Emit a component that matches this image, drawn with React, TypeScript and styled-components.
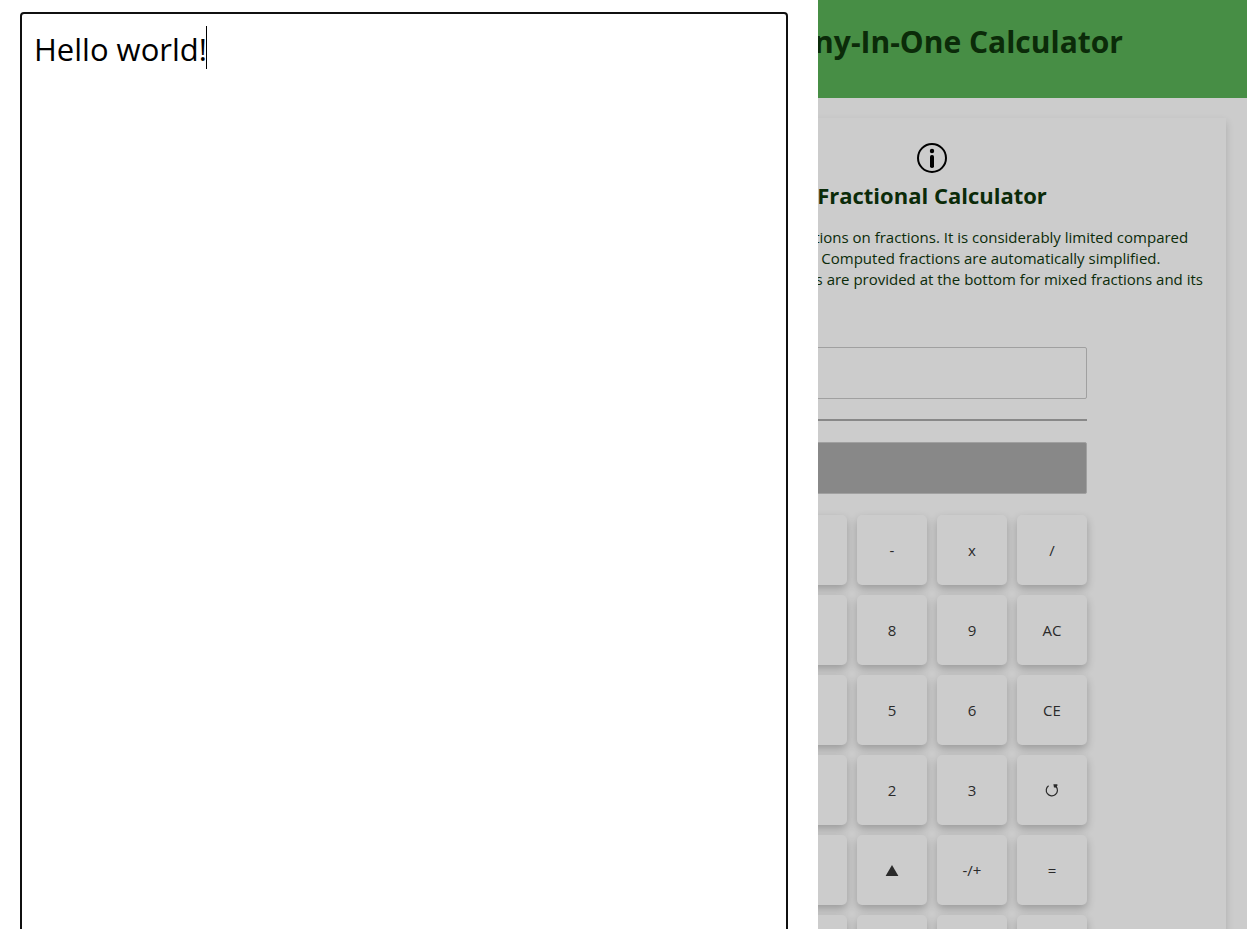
import { useState } from 'react';
import styled, { createGlobalStyle } from 'styled-components';

const GlobalStyle = createGlobalStyle`
  *, *::before, *::after { box-sizing: border-box; }
  body {
    margin: 0;
    background: #cccccc;
    font-family: 'Open Sans', 'Noto Sans', 'DejaVu Sans', sans-serif;
    color: #0b2b09;
  }
  h1, h2, p { margin: 0; }
`;

const Page = styled.div`
  height: 100vh;
  overflow: hidden;
`;

const Header = styled.header`
  height: 98px;
  padding: 20px 124px 0 20px;
  background: #478e45;
  text-align: right;
`;

const SiteTitle = styled.h1`
  font-size: 30px;
  line-height: 44px;
  font-weight: 700;
`;

const Columns = styled.main`
  display: grid;
  grid-template-columns: 1fr 1fr;
  gap: 30px;
  padding: 20px 21px 20px 20px;
`;

const Card = styled.section`
  grid-column: 2;
  display: flex;
  flex-direction: column;
  align-items: center;
  padding: 25px 20px;
  background: #cccccc;
  box-shadow: 0 4px 8px rgba(0, 0, 0, 0.16);
`;

const InfoButton = styled.button`
  display: block;
  width: 30px;
  height: 30px;
  padding: 0;
  border: 0;
  background: none;
  color: #000;

  svg { display: block; }
`;

const CardTitle = styled.h2`
  margin-top: 6px;
  font-size: 22px;
  line-height: 32px;
  font-weight: 700;
  white-space: nowrap;
`;

const Description = styled.p`
  align-self: stretch;
  margin-top: 16px;
  font-size: 15px;
  line-height: 21px;
  white-space: nowrap;
`;

const Calculator = styled.form`
  width: 310px;
  margin-top: 36px;
`;

const Display = styled.input<{ $filled?: boolean }>`
  display: block;
  width: 100%;
  height: 52px;
  padding: 0 10px;
  border: 1px solid #a0a0a0;
  border-radius: 2px;
  background: ${(p) => (p.$filled ? '#888888' : '#cccccc')};
  font: inherit;
  outline: 0;
`;

const FractionBar = styled.hr`
  height: 2px;
  margin: 20px 0 21px;
  border: 0;
  background: #888888;
`;

const Keypad = styled.div`
  display: grid;
  grid-template-columns: repeat(4, 1fr);
  grid-auto-rows: 70px;
  gap: 10px;
  margin-top: 21px;
`;

const Key = styled.button`
  display: flex;
  align-items: center;
  justify-content: center;
  padding: 0;
  border: 0;
  border-radius: 5px;
  background: #cccccc;
  box-shadow: 0 4px 8px rgba(0, 0, 0, 0.24);
  color: #2a2a2a;
  font-family: inherit;
  font-size: 15px;
  line-height: 20px;
`;

const Drawer = styled.aside`
  position: fixed;
  top: 0;
  bottom: 0;
  left: 0;
  width: calc(100% - 429px);
  padding: 12px 30px 0 20px;
  overflow: hidden;
  background: #fff;
`;

const NoteArea = styled.div`
  position: relative;
  height: 100vh;
  font-size: 31px;
  line-height: 43px;
  color: #000;
`;

const NoteField = styled.textarea`
  display: block;
  width: 100%;
  height: 100%;
  padding: 14px 12px;
  border: 2px solid #101010;
  border-radius: 4px;
  background: #fff;
  color: inherit;
  font: inherit;
  resize: none;
  outline: 0;
  caret-color: transparent;
`;

/* Mirrors the note so that the caret follows its last character. */
const CaretLayer = styled.div`
  position: absolute;
  inset: 0;
  padding: 14px 13px;
  color: transparent;
  white-space: pre-wrap;
  pointer-events: none;
`;

const Caret = styled.span`
  display: inline-block;
  width: 1px;
  height: 43px;
  background: #000;
  vertical-align: top;
`;

const InfoIcon = () => (
  <svg width="30" height="30" viewBox="0 0 30 30" aria-hidden="true">
    <circle cx="15" cy="15" r="14" fill="none" stroke="currentColor" strokeWidth="2" />
    <circle cx="15" cy="8" r="2.2" fill="currentColor" />
    <rect x="13" y="12" width="4" height="13" rx="1.8" fill="currentColor" />
  </svg>
);

const UndoIcon = () => (
  <svg width="14" height="14" viewBox="0 0 14 14" aria-hidden="true">
    <path d="M3.6 2.7A5.6 5.6 0 1 0 11 3.5" fill="none" stroke="currentColor" strokeWidth="1.2" />
    <path d="M8.4 1.2H12.4V2.2L11.4 4.6L9 4.6Z" fill="currentColor" />
  </svg>
);

const UpIcon = () => (
  <svg width="14" height="14" viewBox="0 0 14 14" aria-hidden="true">
    <path d="M7 2L13.4 13H0.6Z" fill="currentColor" />
  </svg>
);

type KeyDef = { name: string; face?: React.ReactNode };

const keys: KeyDef[] = [
  ...['+', '-', 'x', '/', '7', '8', '9', 'AC', '4', '5', '6', 'CE', '1', '2', '3'].map(
    (label) => ({ name: label, face: label }),
  ),
  { name: 'Undo', face: <UndoIcon /> },
  { name: '0', face: '0' },
  { name: 'Switch to numerator', face: <UpIcon /> },
  { name: '-/+', face: '-/+' },
  { name: '=', face: '=' },
  { name: 'Mixed fraction' },
  { name: 'Improper fraction' },
  { name: 'Decimal' },
  { name: 'Inverse' },
];

export default function App() {
  const [note, setNote] = useState('Hello world!');

  return (
    <Page>
      <GlobalStyle />
      <Header>
        <SiteTitle>Many-In-One Calculator</SiteTitle>
      </Header>
      <Columns>
        <Card>
          <InfoButton type="button" aria-label="About this calculator">
            <InfoIcon />
          </InfoButton>
          <CardTitle>Fractional Calculator</CardTitle>
          <Description>
            Computes basic operations on fractions. It is considerably limited compared
            <br />
            to the other calculator. Computed fractions are automatically simplified.
            <br />
            The conversion buttons are provided at the bottom for mixed fractions and its
            <br />
            inverse.
          </Description>
          <Calculator onSubmit={(e) => e.preventDefault()}>
            <Display aria-label="Numerator" />
            <FractionBar />
            <Display aria-label="Denominator" $filled />
            <Keypad>
              {keys.map(({ name, face }) => (
                <Key key={name} type="button" aria-label={name}>
                  {face}
                </Key>
              ))}
            </Keypad>
          </Calculator>
        </Card>
      </Columns>
      <Drawer>
        <NoteArea>
          <NoteField aria-label="Notes" value={note} onChange={(e) => setNote(e.target.value)} />
          <CaretLayer aria-hidden="true">
            {note}
            <Caret />
          </CaretLayer>
        </NoteArea>
      </Drawer>
    </Page>
  );
}
